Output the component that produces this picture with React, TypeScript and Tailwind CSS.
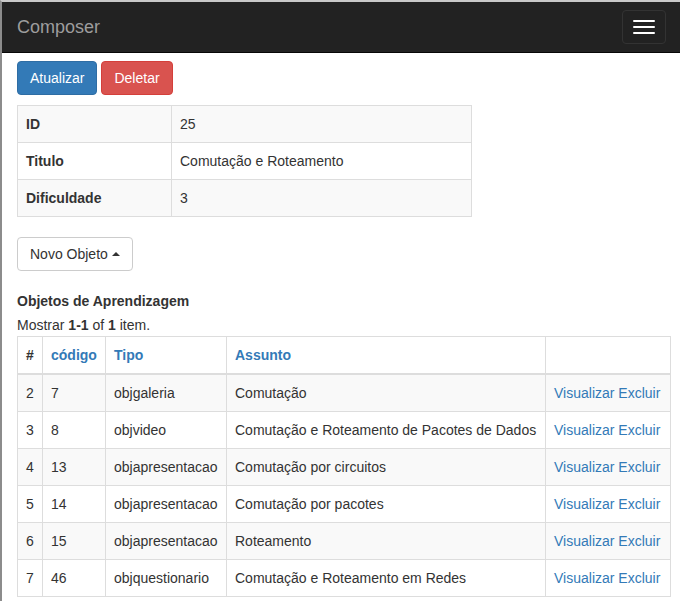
import React from 'react';

const rows = [
  { n: 2, code: '7', tipo: 'objgaleria', assunto: 'Comutação' },
  { n: 3, code: '8', tipo: 'objvideo', assunto: 'Comutação e Roteamento de Pacotes de Dados' },
  { n: 4, code: '13', tipo: 'objapresentacao', assunto: 'Comutação por circuitos' },
  { n: 5, code: '14', tipo: 'objapresentacao', assunto: 'Comutação por pacotes' },
  { n: 6, code: '15', tipo: 'objapresentacao', assunto: 'Roteamento' },
  { n: 7, code: '46', tipo: 'objquestionario', assunto: 'Comutação e Roteamento em Redes' },
];

const details = [
  { label: 'ID', value: '25' },
  { label: 'Titulo', value: 'Comutação e Roteamento' },
  { label: 'Dificuldade', value: '3' },
];

export default function App() {
  return (
    <div
      className="min-h-[601px] border-t-2 border-l-2 border-t-[#c9c9c9] border-l-[#8c8c8c] bg-white text-[14px] leading-[20px] text-[#333]"
      style={{ fontFamily: '"Liberation Sans", Arial, sans-serif' }}
    >
      {/* navbar */}
      <nav className="flex h-[51px] items-start justify-between border-b border-[#080808] bg-[#222] pl-[15px] pr-[14px]">
        <span className="py-[15px] text-[18px] leading-[20px] text-[#9d9d9d]">Composer</span>
        <button className="mt-[8px] flex h-[34px] w-[44px] flex-col items-center justify-center gap-[4px] rounded-[4px] border border-[#333]">
          <span className="block h-[2px] w-[22px] rounded-[1px] bg-white" />
          <span className="block h-[2px] w-[22px] rounded-[1px] bg-white" />
          <span className="block h-[2px] w-[22px] rounded-[1px] bg-white" />
        </button>
      </nav>

      <div className="pl-[15px] pr-[9px]">
        <p className="mb-[10px] mt-[8px] flex gap-[4px]">
          <button className="h-[34px] rounded-[4px] border border-[#2e6da4] bg-[#337ab7] px-[12px] text-white">
            Atualizar
          </button>
          <button className="h-[34px] rounded-[4px] border border-[#d43f3a] bg-[#d9534f] px-[12px] text-white">
            Deletar
          </button>
        </p>

        <table className="mb-[20px] w-[455px] border-collapse border border-[#ddd]">
          <tbody>
            {details.map((d, i) => (
              <tr key={d.label} className={i % 2 === 0 ? 'bg-[#f9f9f9]' : ''}>
                <th className="w-[154px] border border-[#ddd] p-[8px] text-left font-bold">{d.label}</th>
                <td className="border border-[#ddd] p-[8px]">{d.value}</td>
              </tr>
            ))}
          </tbody>
        </table>

        <button className="flex h-[34px] items-center rounded-[4px] border border-[#ccc] bg-white px-[12px] text-[#333]">
          Novo Objeto
          <span className="ml-[4px] inline-block h-0 w-0 border-x-[4px] border-b-[4px] border-x-transparent border-b-[#333]" />
        </button>

        <h5 className="mb-[4px] mt-[20px] font-bold">Objetos de Aprendizagem</h5>
        <div className="mb-[1px]">
          Mostrar <b>1-1</b> of <b>1</b> item.
        </div>

        <table className="w-full table-fixed border-collapse border border-[#ddd]">
          <colgroup>
            <col className="w-[25px]" />
            <col className="w-[63px]" />
            <col className="w-[121px]" />
            <col className="w-[319px]" />
            <col />
          </colgroup>
          <thead>
            <tr>
              <th className="border border-b-2 border-[#ddd] p-[8px] text-left font-bold">#</th>
              <th className="border border-b-2 border-[#ddd] p-[8px] text-left font-bold text-[#337ab7]">código</th>
              <th className="border border-b-2 border-[#ddd] p-[8px] text-left font-bold text-[#337ab7]">Tipo</th>
              <th className="border border-b-2 border-[#ddd] p-[8px] text-left font-bold text-[#337ab7]">Assunto</th>
              <th className="border border-b-2 border-[#ddd] p-[8px]" />
            </tr>
          </thead>
          <tbody>
            {rows.map((r, i) => (
              <tr key={r.n} className={i % 2 === 0 ? 'bg-[#f9f9f9]' : ''}>
                <td className="border border-[#ddd] p-[8px]">{r.n}</td>
                <td className="border border-[#ddd] p-[8px]">{r.code}</td>
                <td className="whitespace-nowrap border border-[#ddd] p-[8px]">{r.tipo}</td>
                <td className="whitespace-nowrap border border-[#ddd] p-[8px]">{r.assunto}</td>
                <td className="whitespace-nowrap border border-[#ddd] p-[8px] text-[#337ab7]">
                  <a href="#">Visualizar</a> <a href="#">Excluir</a>
                </td>
              </tr>
            ))}
          </tbody>
        </table>
      </div>
    </div>
  );
}
